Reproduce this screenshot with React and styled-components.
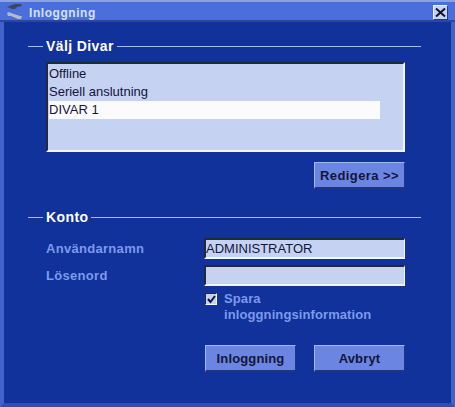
import React from "react";
import styled, { createGlobalStyle } from "styled-components";

const Global = createGlobalStyle`
  html, body { margin: 0; padding: 0; background: #10329a; }
  body { font-family: "Liberation Sans", Arial, sans-serif; }
  * { box-sizing: border-box; }
`;

const Window = styled.div`
  width: 455px;
  height: 407px;
  display: flex;
  flex-direction: column;
  background: #10329a;
  border-left: 4px solid #3f63c8;
  border-right: 4px solid #3f63c8;
  border-bottom: 4px solid #2f4fb4;
`;

const TitleBar = styled.div`
  height: 22px;
  margin: 0 -4px;
  padding: 3px 7px 0 6px;
  display: flex;
  align-items: center;
  background: #4a6fdc;
  border-top: 2px solid #8ba2e4;
  border-bottom: 2px solid #2c4698;
`;

const TitleText = styled.span`
  margin-left: 6px;
  font-size: 12px;
  font-weight: bold;
  color: #d6e0fa;
  letter-spacing: 0.55px;
`;

const CloseButton = styled.div`
  margin-left: auto;
  width: 15px;
  height: 15px;
  display: flex;
  align-items: center;
  justify-content: center;
  background: #c5d2f2;
  border-top: 1px solid #e8eefc;
  border-left: 1px solid #e8eefc;
  border-right: 1px solid #223a8c;
  border-bottom: 1px solid #223a8c;
`;

const Body = styled.div`
  flex: 1;
  padding: 16px 30px 0 24px;
  display: flex;
  flex-direction: column;
`;

const SectionHead = styled.div`
  height: 16px;
  display: flex;
  align-items: center;
  gap: 3px;
  margin-top: ${(p) => p.$top || 0}px;

  &::before {
    content: "";
    width: 15px;
    height: 1px;
    background: #a9b9ea;
  }
  &::after {
    content: "";
    flex: 1;
    height: 1px;
    background: #a9b9ea;
  }
`;

const SectionTitle = styled.span`
  font-size: 14px;
  font-weight: bold;
  color: #fff;
  letter-spacing: 0.4px;
`;

const Indent = styled.div`
  margin-left: 18px;
  margin-right: 16px;
  display: flex;
  flex-direction: column;
`;

const ListBox = styled.div`
  height: 90px;
  margin-top: 8px;
  padding: 1px 1px 0 1px;
  background: #c5d2f2;
  border-top: 2px solid #23283c;
  border-left: 2px solid #23283c;
  border-right: 2px solid #f2f5fd;
  border-bottom: 2px solid #f2f5fd;
`;

const ListItem = styled.div`
  height: 18px;
  width: 331px;
  font-size: 13px;
  line-height: 18px;
  color: #14143c;
  background: ${(p) => (p.$selected ? "#fbfbfb" : "transparent")};
`;

const ButtonRow = styled.div`
  display: flex;
  justify-content: flex-end;
  gap: 18px;
  margin-top: ${(p) => p.$top}px;
`;

const Button = styled.button`
  width: 91px;
  height: 27px;
  padding: 0;
  font-family: inherit;
  font-size: 13px;
  font-weight: bold;
  letter-spacing: ${(p) => p.$spacing || 0.15}px;
  color: #14143c;
  background: #6a86e2;
  border-top: 1px solid #a3b5ee;
  border-left: 1px solid #a3b5ee;
  border-right: 1px solid #1f3580;
  border-bottom: 2px solid #1f3580;
`;

const FormGrid = styled.div`
  margin-top: 13px;
  display: grid;
  grid-template-columns: 158px 201px;
  row-gap: 6px;
  align-items: center;
`;

const Label = styled.label`
  font-size: 13px;
  font-weight: bold;
  letter-spacing: 0.3px;
  color: #7e9aeb;
`;

const Field = styled.div`
  height: 21px;
  font-size: 13px;
  line-height: 18px;
  color: #14143c;
  background: #c5d2f2;
  border-top: 2px solid #23283c;
  border-left: 2px solid #23283c;
  border-right: 1px solid #f2f5fd;
  border-bottom: 2px solid #f2f5fd;
`;

const SaveRow = styled.div`
  margin-top: 5px;
  margin-left: 158px;
  display: flex;
  gap: 7px;
`;

const CheckBox = styled.div`
  width: 12px;
  height: 12px;
  margin: 2px 0 0 1px;
  flex: none;
  display: flex;
  align-items: center;
  justify-content: center;
  background: #c5d2f2;
  border-top: 1px solid #23283c;
  border-left: 1px solid #23283c;
  border-right: 1px solid #f2f5fd;
  border-bottom: 1px solid #f2f5fd;
`;

const SaveText = styled.span`
  width: 175px;
  font-size: 13px;
  font-weight: bold;
  line-height: 16px;
  letter-spacing: 0.1px;
  color: #7e9aeb;
`;

const ToolsIcon = () => (
  <svg width="17" height="17" viewBox="0 0 17 17">
    <path d="M1 3 L6 1 L9 0 L15 0 L16 2 L11 3 L9 5 L6 5 L4 4 Z" fill="#3e4658" />
    <path d="M1 9 L3 8 L5 9 L14 12 L16 12 L15 15 L12 15 L5 12 L2 12 Z" fill="#b4bac4" />
  </svg>
);

const CloseIcon = () => (
  <svg width="11" height="9" viewBox="0 0 11 9">
    <path d="M1 0.5 L10 8.5 M10 0.5 L1 8.5" stroke="#10132c" strokeWidth="2" />
  </svg>
);

const CheckIcon = () => (
  <svg width="9" height="9" viewBox="0 0 9 9">
    <path d="M1 4 L3.5 7 L8 1" fill="none" stroke="#14143c" strokeWidth="2" />
  </svg>
);

export default function App() {
  return (
    <>
      <Global />
      <Window>
        <TitleBar>
          <ToolsIcon />
          <TitleText>Inloggning</TitleText>
          <CloseButton>
            <CloseIcon />
          </CloseButton>
        </TitleBar>
        <Body>
          <SectionHead>
            <SectionTitle>Välj Divar</SectionTitle>
          </SectionHead>
          <Indent>
            <ListBox>
              <ListItem>Offline</ListItem>
              <ListItem>Seriell anslutning</ListItem>
              <ListItem $selected>DIVAR 1</ListItem>
            </ListBox>
            <ButtonRow $top={10}>
              <Button $spacing={0.4}>Redigera &gt;&gt;</Button>
            </ButtonRow>
          </Indent>
          <SectionHead $top={20}>
            <SectionTitle>Konto</SectionTitle>
          </SectionHead>
          <Indent>
            <FormGrid>
              <Label>Användarnamn</Label>
              <Field>ADMINISTRATOR</Field>
              <Label>Lösenord</Label>
              <Field />
            </FormGrid>
            <SaveRow>
              <CheckBox>
                <CheckIcon />
              </CheckBox>
              <SaveText>Spara inloggningsinformation</SaveText>
            </SaveRow>
            <ButtonRow $top={22}>
              <Button>Inloggning</Button>
              <Button>Avbryt</Button>
            </ButtonRow>
          </Indent>
        </Body>
      </Window>
    </>
  );
}
